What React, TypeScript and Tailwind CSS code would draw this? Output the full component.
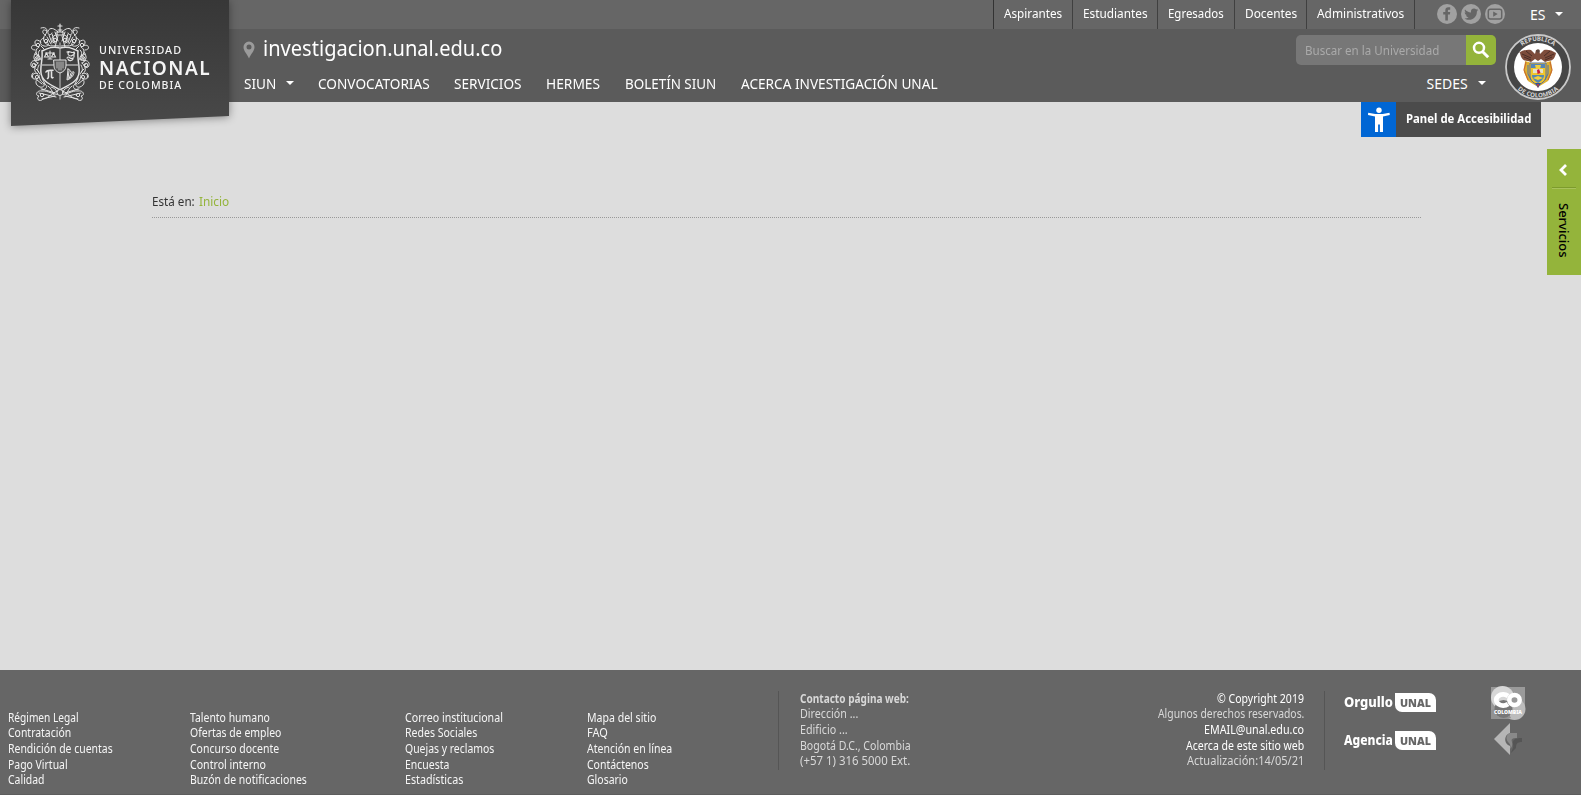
import { useLayoutEffect, useRef, useState } from 'react';

/** Single line of text, condensed or widened horizontally to a given width. */
function Fit({ w, children, className = '' }: { w: number; children: string; className?: string }) {
  const ref = useRef<HTMLSpanElement>(null);
  const [scale, setScale] = useState(1);
  useLayoutEffect(() => {
    if (ref.current) setScale(w / ref.current.offsetWidth);
  }, [w, children]);
  return (
    <span className={`block shrink-0 whitespace-nowrap ${className}`} style={{ width: w }}>
      <span ref={ref} className="inline-block origin-left" style={{ transform: `scaleX(${scale})` }}>
        {children}
      </span>
    </span>
  );
}

function Caret({ className = '' }: { className?: string }) {
  return (
    <svg viewBox="0 0 8 4" className={`h-1 w-2 shrink-0 ${className}`}>
      <path d="M0 0h8L4 4z" fill="#fff" />
    </svg>
  );
}

function CrestHalf() {
  return (
    <g>
      <path d="M30 25C23 23 18 25 12 28C13 36 10 43 11 50C12 59 22 62 30 67" strokeWidth="1.5" />
      <path d="M28 9C24 5 20 4 18 8C17 12 21 13 22 10M27 12C22 12 20 17 24 20M22 11l3 9M19 12l3 8M17 14l4 7M25 9l3 9M28 13l-3 11" />
      <path d="M17 8C11 4 12 12 16 12C12 13 13 20 18 22C21 24 25 22 29 23M14 15C9 16 9 22 14 23C18 24 20 21 17 19" />
      <path d="M11 5C17 3 19 8 15 12" />
      <path d="M11 19C5 14 3 20 7 23C1 20 -1 27 5 27M9 24C5 26 5 31 9 33C4 33 3 39 8 40M10 27C6 30 10 34 11 37" />
      <path d="M6 29C3 34 3 36 7 38C2 36 -1 41 2 44C5 46 7 42 4 41M8 40C3 45 4 49 8 51C4 49 1 52 3 55M9 42C7 46 7 48 10 51" />
      <path d="M3 50C-1 54 4 58 8 55C5 58 5 62 10 64C13 65 16 62 13 60M9 52C9 58 13 60 16 62C18 64 15 68 11 66" />
      <path d="M6 46l3 3M5 34l4 3M7 57l5 4M12 55l3 6M5 31l5 3M11 23l3 3" />
      <path d="M30 71C24 73 18 67 12 68C6 67 5 73 9 73C5 77 11 79 13 76C18 76 24 68 30 67M9 70L26 74M12 66L25 70M12 76l13-3" />
      <path d="M18 63C21 65 22 68 24 72M21 64c3 1 5 2 6 5" />
      <circle cx="8" cy="22" r="1.7" />
      <circle cx="4" cy="42" r="1.8" />
      <circle cx="8" cy="36" r="1.4" />
      <circle cx="7" cy="54" r="1.6" />
      <circle cx="12" cy="72" r="1.7" />
      <circle cx="16" cy="18" r="1.7" />
      <circle cx="25" cy="17" r="1.8" />
    </g>
  );
}

function Crest() {
  return (
    <svg viewBox="0 0 60 78" className="h-[78px] w-[60px] shrink-0" fill="none" stroke="#e2e2e2" strokeWidth="1" strokeLinecap="round">
      <CrestHalf />
      <g transform="translate(60 0) scale(-1 1)">
        <CrestHalf />
      </g>
      <path d="M30 1v7M28 3h4M28 7h4M27 9h6v3h-6z" strokeWidth="1.2" />
      <path d="M30 20v56M12 42h36" stroke="#aaa" strokeWidth="1.3" />
      <circle cx="30" cy="69.500" r="3" fill="#484848" />
      <path d="M24 37h12v6c0 4-3 6-6 7c-3-1-6-3-6-7z" fill="#555" strokeWidth="1" />
      <path d="M27 39v6M29 39v8M31 39v8M33 39v6" stroke="#bbb" />
      <path d="M20 28v8M18 36h4M15.500 30h9M16.500 30l-2 4h4zM23.500 30l-2 4h4z" strokeWidth="1.1" />
      <path d="M37 29c3-2 4 2 7 0c2 2-1 3-3 4c-3 0-4-3-2-4M37 35c2-3 3 2 6 0c1 2-4 4-5 1M44 30v4" strokeWidth="1.2" />
      <path d="M16 49c1-2 2-1.500 7-1.700M18.500 48v6c0 1-1 1.500-1 1.500M21.500 48v6c0 1 1 1 1.500.5" strokeWidth="1.6" />
      <path d="M38 46l-1 11c3-1 7-4 7-8c-1-1-2 1-3 0s-1-3-3-3zM39 48l-1 8M41 50l-2 6M42.500 50l-2 5" />
    </svg>
  );
}

function Logo() {
  return (
    <div className="absolute left-[11px] top-0 h-[127px] w-[218px] drop-shadow-[0_1px_4px_rgba(0,0,0,0.4)]">
      <div className="flex h-full bg-gradient-to-b from-[#373737] to-[#494949] pl-[19px] pt-[23px] [clip-path:polygon(0_0,100%_0,100%_116px,0_126px)]">
        <Crest />
        <div className="ml-[8.500px] flex flex-col pt-[18px] text-[#f4f4f4]">
          <Fit w={83} className="text-[10.500px] font-medium leading-[18px] tracking-[1px]">UNIVERSIDAD</Fit>
          <Fit w={112.5} className="text-[19px] font-semibold leading-[18px] tracking-[1.500px]">NACIONAL</Fit>
          <Fit w={83.5} className="text-[10.500px] font-medium leading-[17px] tracking-[1px]">DE COLOMBIA</Fit>
        </div>
      </div>
    </div>
  );
}

const profiles: [string, number, number][] = [
  ['Aspirantes', 58.5, 79],
  ['Estudiantes', 64.5, 85],
  ['Egresados', 55.5, 77],
  ['Docentes', 52, 72],
  ['Administrativos', 87, 108],
];

function SocialIcons() {
  return (
    <svg viewBox="0 0 68 20" className="ml-[22px] mt-1 h-5 w-[68px]">
      <g fill="#a1a1a1">
        <circle cx="10" cy="10" r="10" />
        <circle cx="34" cy="10" r="10" />
        <circle cx="58" cy="10" r="10" />
      </g>
      <path d="M8.300 16.500v-6H6.200V7.900h2.100V6.500c0-2 1-3.200 3-3.200h1.900v2.500h-1.300c-.8 0-1 .3-1 1v1.100h2.300l-.3 2.600h-2v6z" fill="#666" />
      <path d="M28 5.500c1.600 1.800 3.500 2.800 6 3c-.5-2.400 1-4 3-4c.8 0 1.600.3 2.200.9l1.800-.7l-1.200 1.700l1.600-.4l-1.500 1.500c.1 5-3.600 8.300-7.900 8.300c-1.800 0-3.300-.5-4.600-1.300c1.700.1 3.100-.3 4.200-1.200c-1.400-.1-2.300-.9-2.700-2h1.200c-1.500-.5-2.400-1.600-2.400-3.100l1.300.4c-1.300-1-1.600-2.200-1-3.100z" fill="#666" />
      <rect x="51.300" y="5.300" width="13.400" height="9.600" rx="2" fill="none" stroke="#666" strokeWidth="1.500" />
      <path d="M56.200 7.400l4.500 2.700l-4.500 2.700z" fill="#666" />
    </svg>
  );
}

const menu: [string, number, number][] = [
  ['CONVOCATORIAS', 112, 24],
  ['SERVICIOS', 68, 24],
  ['HERMES', 54, 25],
  ['BOLETÍN SIUN', 91, 25],
  ['ACERCA INVESTIGACIÓN UNAL', 196.5, 0],
];

function NationalSeal() {
  return (
    <svg viewBox="0 0 66 66" className="ml-[9px] mt-[5px] h-[66px] w-[66px] shrink-0">
      <defs>
        <path id="sealTop" d="M6.800 33a26.200 26.200 0 0 1 52.400 0" />
        <path id="sealBottom" d="M2.500 33a30.500 30.500 0 0 0 61 0" />
      </defs>
      <circle cx="33" cy="33" r="32" fill="#464646" stroke="#c9c9c9" strokeWidth="1.800" />
      <circle cx="33" cy="33" r="24" fill="#fff" />
      <g fill="#d5d5d5" fontSize="6.200" fontWeight="700" textAnchor="middle">
        <text><textPath href="#sealTop" startOffset="50%" textLength="34">REPÚBLICA</textPath></text>
        <text><textPath href="#sealBottom" startOffset="50%" textLength="45">DE COLOMBIA</textPath></text>
      </g>
      <path d="M15 19c1 5 3 8 8 8l3 1l4-3l3 2l3-2l4 3l3-1c5 0 7-3 8-8c-4-3-9-4-12-3l-4 4l-1-4h-3l-1 4l-4-4c-3-1-8 0-12 3z" fill="#7d4c3b" />
      <path d="M17 20l9 4M19 23l7 3M21 17l6 5M49 20l-9 4M47 23l-7 3M45 17l-6 5" stroke="#4b2e27" />
      <circle cx="33" cy="17" r="1.800" fill="#5e473f" />
      <path d="M20 27l7 2h12l7-2l1 11l-4 9l-10 6l-10-6l-4-9z" fill="#dfb030" />
      <path d="M25 29v13c0 5 5 8 8 9c3-1 8-4 8-9V29z" fill="#f0c62c" stroke="#5b7099" strokeWidth="1" />
      <path d="M26 30h14v4H26z" fill="#5585b8" />
      <path d="M28 35h10v4H28z" fill="#e4e2c8" />
      <path d="M27 41h12c0 4-3 6-6 8c-3-2-6-4-6-8z" fill="#5588b0" />
      <path d="M30 31h6l-1 4h-4z" fill="#f0d040" />
      <path d="M32 36l2-1l1.500 4l-3 1z" fill="#cc2038" />
      <path d="M28 44l5-2l5 2l-5 2z" fill="#f3d040" />
      <path d="M21 28l-2 8l4 10M45 28l2 8l-4 10" fill="none" stroke="#c9702e" strokeWidth="1.200" />
      <path d="M23 31v9l3 6M43 31v9l-3 6" fill="none" stroke="#4672ad" strokeWidth="1" />
      <path d="M30 49h6l-3 5z" fill="#2f56a0" />
      <path d="M32 50h2l-1 4z" fill="#c83c3c" />
    </svg>
  );
}

function Header() {
  return (
    <header className="relative z-10 text-white">
      <div className="flex h-[29px] justify-end bg-[#666]">
        <nav className="flex border-l border-[#333] text-[13px] leading-[26px]">
          {profiles.map(([label, w, cell]) => (
            <a key={label} className="border-r border-[#404040] pl-[10px]" style={{ width: cell }}>
              <Fit w={w}>{label}</Fit>
            </a>
          ))}
        </nav>
        <SocialIcons />
        <div className="ml-[25px] mr-[18px] flex w-[33px] justify-between text-[14px] leading-[29px]">
          <Fit w={15}>ES</Fit>
          <Caret className="mt-[12px]" />
        </div>
      </div>
      <div className="flex h-[73px] bg-[#5b5b5b] pl-[243px]">
        <div className="flex flex-1 flex-col">
          <div className="flex h-[45px] pt-[5px]">
            <svg viewBox="0 0 12 18" className="mt-[6.500px] h-[18px] w-3 shrink-0">
              <path fillRule="evenodd" d="M6 .5a5.500 5.500 0 0 0-5.500 5.600C.5 10 4 13 6 17.500C8 13 11.500 10 11.500 6.100A5.500 5.500 0 0 0 6 .5zm0 3a2.500 2.500 0 1 1 0 5a2.500 2.500 0 0 1 0-5z" fill="#9b9b9b" />
            </svg>
            <Fit w={239} className="ml-2 text-[21px] leading-[28px]">investigacion.unal.edu.co</Fit>
          </div>
          <nav className="flex text-[14px] leading-[20px]">
            <Fit w={32} className="ml-[0.500px]">SIUN</Fit>
            <Caret className="ml-[10px] mr-[24px] mt-[7px]" />
            {menu.map(([label, w, gap]) => (
              <a key={label} style={{ marginRight: gap }}>
                <Fit w={w}>{label}</Fit>
              </a>
            ))}
          </nav>
        </div>
        <div className="flex w-[200px] flex-col pt-1.5">
          <div className="flex h-[30px] overflow-hidden rounded-[5px]">
            <div className="flex-1 bg-[#777] pl-[9px] text-[13px] leading-[31px] text-[#aaa]">
              <Fit w={134.5}>Buscar en la Universidad</Fit>
            </div>
            <button className="flex w-[30px] items-center justify-center bg-[#94b43b]">
              <svg viewBox="0 0 18 18" className="h-[18px] w-[18px]" fill="none" stroke="#fff">
                <circle cx="7" cy="6.800" r="5" strokeWidth="2.500" />
                <path d="M10.700 10.800l5.500 5.500" strokeWidth="3" />
              </svg>
            </button>
          </div>
          <div className="mt-[9px] flex justify-end pr-[10px] text-[14px] leading-[20px]">
            <Fit w={41}>SEDES</Fit>
            <Caret className="ml-[10.500px] mt-[7px]" />
          </div>
        </div>
        <NationalSeal />
        <div className="w-[10px]" />
      </div>
      <Logo />
    </header>
  );
}

function AccessibilityPanel() {
  return (
    <div className="ml-[1361px] flex h-[35px] w-[180px] bg-[#4b4b4b] text-[13px] font-bold leading-[32px] text-white">
      <svg viewBox="0 0 35 35" className="h-[35px] w-[35px] bg-[#0066d4]" fill="#fff">
        <circle cx="18" cy="8.300" r="2.700" />
        <path d="M7.200 10.800l7 1.100h7.500l6.800-1.100l.3 2.200l-6.800 1.500V30h-3.100v-7.500h-1.800V30H14V14.500l-7-1.500z" />
      </svg>
      <Fit w={125} className="ml-[10px]">Panel de Accesibilidad</Fit>
    </div>
  );
}

function ServicesTab() {
  return (
    <aside className="absolute right-0 top-[149px] flex h-[126px] w-[34px] flex-col items-center bg-[#94b43b]">
      <svg viewBox="0 0 8 12" className="mr-[2px] mt-[15px] h-3 w-2" fill="none" stroke="#fff" strokeWidth="2.800">
        <path d="M7 1L2 6l5 5" />
      </svg>
      <div className="mt-[11px] h-0.5 w-6 border-b border-t border-b-[#a9c35c] border-t-[#7d9b2d]" />
      <div className="mt-[14px] h-[56px] w-[18px] text-[13px] font-medium leading-[18px] text-black [writing-mode:vertical-rl]">
        Servicios
      </div>
    </aside>
  );
}

const linkColumns: { width: string; links: [string, number][] }[] = [
  { width: 'w-[182px]', links: [['Régimen Legal', 71], ['Contratación', 63.5], ['Rendición de cuentas', 104.5], ['Pago Virtual', 60], ['Calidad', 36.5]] },
  { width: 'w-[215px]', links: [['Talento humano', 80], ['Ofertas de empleo', 91.5], ['Concurso docente', 89], ['Control interno', 76], ['Buzón de notificaciones', 117]] },
  { width: 'w-[182px]', links: [['Correo institucional', 97.5], ['Redes Sociales', 72], ['Quejas y reclamos', 89.5], ['Encuesta', 44.5], ['Estadísticas', 58]] },
  { width: 'w-[191px]', links: [['Mapa del sitio', 69.5], ['FAQ', 21], ['Atención en línea', 85], ['Contáctenos', 62], ['Glosario', 41]] },
];

function UnalBadge({ word, w }: { word: string; w: number }) {
  return (
    <div className="flex h-[38px] items-start text-white">
      <Fit w={w} className="text-[14px] font-extrabold leading-[18px]">{word}</Fit>
      <div className="ml-0.5 h-[19px] w-[41px] rounded-bl-[7px] rounded-tr-[7px] bg-white pl-[5px] text-[11px] font-black leading-[20px] text-[#666]">
        <Fit w={31}>UNAL</Fit>
      </div>
    </div>
  );
}

function FooterMarks() {
  return (
    <svg viewBox="0 0 36 72" className="ml-[54px] mt-[15px] h-[72px] w-9 shrink-0">
      <path d="M1 2h34v22l-11 10H1z" fill="#9a9a9a" />
      <circle cx="12.500" cy="12.500" r="11.500" fill="#d7d7d7" />
      <circle cx="24.500" cy="24" r="11" fill="#bcbcbc" />
      <path d="M1 25c9-3 16 0 20 8l-4 1H1z" fill="#929292" />
      <circle cx="13.500" cy="24" r="9" fill="#777" />
      <path d="M18 11a7 5.500 0 1 0 0 8" fill="none" stroke="#fff" strokeWidth="4.800" />
      <ellipse cx="24.500" cy="15" rx="5.200" ry="5" fill="#999" stroke="#fff" strokeWidth="4.500" />
      <text x="4" y="28.500" textLength="28" lengthAdjust="spacingAndGlyphs" fontSize="5.200" fontWeight="900" fill="#fff">COLOMBIA</text>
      <path d="M20 38v10c-6 2-6 9-2 12l2 1v9L4 54z" fill="#b6b6b6" />
      <path d="M20 48h7v5c-5 0-6 1-5 4c1 4-1 6-2 7c1-4 0-5-2-7c-3-4-1-8 2-9z" fill="#898989" />
      <path d="M32 53v4c-5 0-6 2-6 6l-5 5c1-4 3-5 2-9c-1-4 2-6 9-6z" fill="#555" />
    </svg>
  );
}

function Footer() {
  return (
    <footer className="flex h-[125px] border-b border-[#5d5d5d] bg-[#666] pl-2 text-[12px] leading-[15.700px] text-[#f6f6f6]">
      {linkColumns.map(({ width, links }) => (
        <div key={links[0][0]} className={`shrink-0 pt-[39.500px] ${width}`}>
          {links.map(([label, w]) => <Fit key={label} w={w}>{label}</Fit>)}
        </div>
      ))}
      <div className="mt-[21px] flex h-[79px] w-[547px] shrink-0 justify-between border-x border-[#555] pl-[20.500px] pr-[20px] text-[#d8d8d8]">
        <div className="-mt-[0.500px]">
          <Fit w={109} className="font-bold">Contacto página web:</Fit>
          <Fit w={58}>Dirección ...</Fit>
          <Fit w={47.5}>Edificio ...</Fit>
          <Fit w={111}>Bogotá D.C., Colombia</Fit>
          <Fit w={110.5}>(+57 1) 316 5000 Ext.</Fit>
        </div>
        <div className="-mt-[0.500px] flex flex-col items-end">
          <Fit w={87} className="text-white">© Copyright 2019</Fit>
          <Fit w={146}>Algunos derechos reservados.</Fit>
          <Fit w={100} className="text-white">EMAIL@unal.edu.co</Fit>
          <Fit w={118.5} className="text-white">Acerca de este sitio web</Fit>
          <Fit w={117}>Actualización:14/05/21</Fit>
        </div>
      </div>
      <div className="ml-[19px] shrink-0 pt-[23px]">
        <UnalBadge word="Orgullo" w={49} />
        <UnalBadge word="Agencia" w={49} />
      </div>
      <FooterMarks />
    </footer>
  );
}

export default function App() {
  return (
    <div className="relative flex h-[795px] w-[1581px] flex-col overflow-hidden bg-[#ddd] font-['Noto_Sans','Open_Sans',sans-serif]">
      <Header />
      <main className="flex-1">
        <AccessibilityPanel />
        <div className="ml-[152px] mt-[55px] flex h-[26px] w-[1269px] gap-[4px] border-b border-dotted border-[#999] text-[13px] leading-[18px] text-[#333]">
          <Fit w={43}>Está en:</Fit>
          <Fit w={30} className="text-[#94b43b]">Inicio</Fit>
        </div>
      </main>
      <ServicesTab />
      <Footer />
    </div>
  );
}
